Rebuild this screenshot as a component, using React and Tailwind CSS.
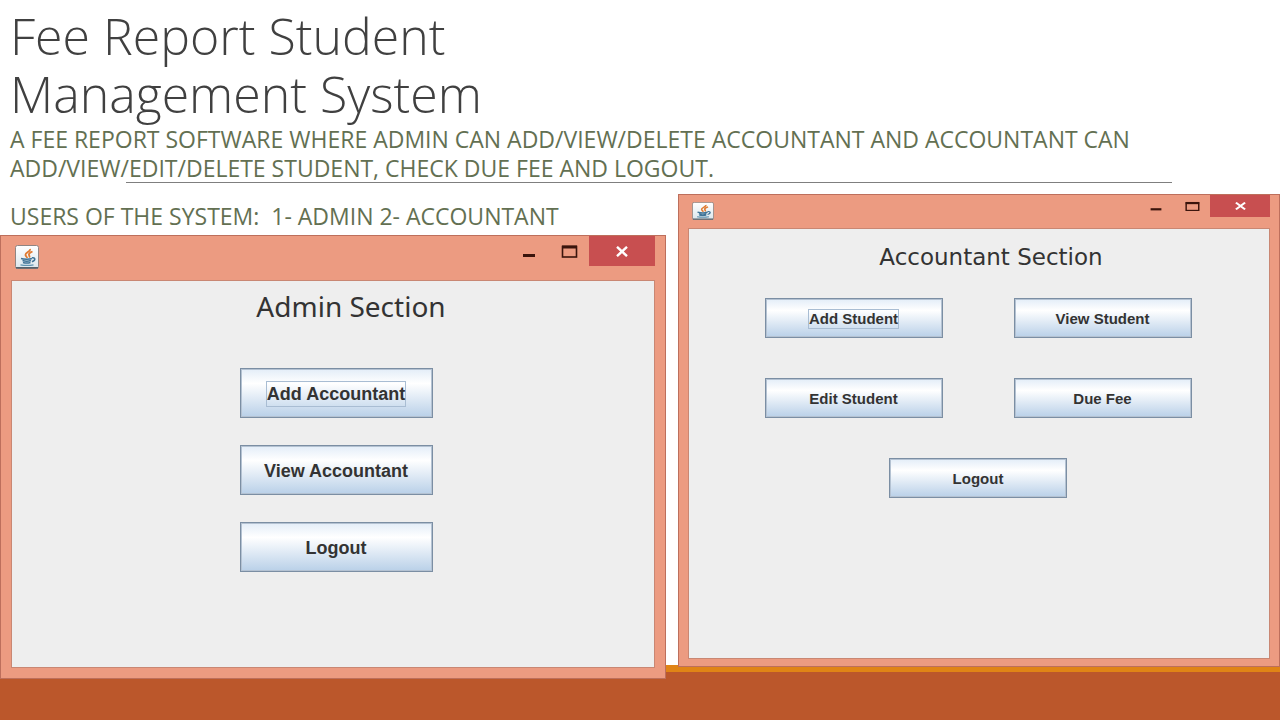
import React from 'react';
import clsx from 'clsx';

function JavaIcon({ className }) {
  return (
    <svg className={className} viewBox="0 0 24 24" preserveAspectRatio="none" aria-hidden="true">
      <defs>
        <linearGradient id="tile" x1="0" y1="0" x2="0" y2="1">
          <stop offset="0" stopColor="#ffffff" />
          <stop offset="1" stopColor="#dbe6ec" />
        </linearGradient>
      </defs>
      <rect x="0.5" y="0.5" width="23" height="23" rx="2" fill="url(#tile)" stroke="#8f8583" />
      <path d="M1 22.8h22" stroke="#56616b" strokeWidth="1.6" />
      <path d="M15 4c1 2.500-5 3.500-4.500 6 .2 1.200 1.500 2 1.800 3M17.500 6.500c-2.500 1-4 2-3.500 3.500.3.900 1 1.500.2 2.500" fill="none" stroke="#e07a30" strokeWidth="1.800" />
      <path d="M6 13.500c3 1 8.500 1 11 0M7.500 15.500c2.500.9 6 .9 8.500 0M8 17.500c2.500.8 5 .8 7.500 0M17 12.800c3.500-.6 4 2.400 0 4" fill="none" stroke="#3f7396" strokeWidth="1.500" />
      <path d="M5.500 19.800c4 .8 9 .8 13 0" fill="none" stroke="#5f93b0" strokeWidth="1.300" />
    </svg>
  );
}

function SwingButton({ children, large, focused }) {
  return (
    <button
      type="button"
      className={clsx(
        'flex items-center justify-center border border-[#7b8ea3] bg-linear-to-b from-[#e3edf8] via-white via-30% to-[#b9d0e8] font-bold text-[#333333] inset-ring inset-ring-[#b4c2d2]',
        large ? 'h-[50px] w-[193px] pt-[2px] text-lg' : 'h-10 w-[178px] pt-px text-[15px]'
      )}
    >
      <span className={clsx('border', large ? 'leading-6' : 'leading-[18px]', focused ? 'border-[#a9bdd3]' : 'border-transparent')}>
        {children}
      </span>
    </button>
  );
}

function AppWindow({ large, children }) {
  return (
    <section
      className={clsx(
        'flex flex-col border border-[#bd6f5c] bg-[#ec9b81] font-["Liberation_Sans",Arial,sans-serif]',
        large ? 'px-[10px] pb-[10px]' : 'px-[9px] pb-[7px]'
      )}
    >
      <div className={clsx('flex items-start justify-between', large ? 'h-11' : 'h-[33px]')}>
        <JavaIcon className={large ? 'mt-[9px] ml-1 h-6 w-6' : 'mt-[7px] ml-1 h-[18px] w-[22px]'} />
        <div className="flex items-start">
          <button type="button" aria-label="Minimize" className={large ? 'h-[30px] w-10' : 'h-[22px] w-9'}>
            <svg className="h-full w-full" viewBox="0 0 40 30" preserveAspectRatio="none" aria-hidden="true">
              <path d="M14 19.500h12" stroke="#3a140c" strokeWidth="3" />
            </svg>
          </button>
          <button type="button" aria-label="Maximize" className={large ? 'h-[30px] w-10' : 'h-[22px] w-9'}>
            <svg className="h-full w-full" viewBox="0 0 40 30" preserveAspectRatio="none" aria-hidden="true">
              <rect x="13.500" y="10.500" width="14" height="10.500" fill="none" stroke="#3a140c" strokeWidth="1.600" />
              <path d="M13 11h15" stroke="#3a140c" strokeWidth="3" />
            </svg>
          </button>
          <button
            type="button"
            aria-label="Close"
            className={clsx('flex items-center justify-center bg-[#c84f50]', large ? 'h-[30px] w-[66px]' : 'h-[22px] w-[60px]')}
          >
            <svg className={large ? 'h-[11px] w-3' : 'h-2 w-[11px]'} viewBox="0 0 12 11" preserveAspectRatio="none" aria-hidden="true">
              <path d="M1 .8l10 9.400M11 .8L1 10.200" stroke="#ffffff" strokeWidth="2.400" />
            </svg>
          </button>
        </div>
      </div>
      <div className={clsx('flex flex-col items-center border border-[#c98773] bg-[#eeeeee]', large ? 'h-[388px]' : 'h-[431px]')}>
        {children}
      </div>
    </section>
  );
}

function App() {
  return (
    <div className="relative min-h-screen w-full overflow-hidden bg-white font-['Open_Sans',sans-serif]">
      {/* Slide footer band, the windows sit on top of it */}
      <div className="absolute inset-x-0 bottom-0 h-[55px] border-t-[7px] border-[#e08416] bg-[#bb572b]" />

      <header className="relative h-[194px] pt-[7px] pl-[10px]">
        <h1 className="text-[50px] leading-[58px] font-light text-[#404040]">
          Fee Report Student
          <br />
          Management System
        </h1>
        <p className="pt-[2px] text-[23px] leading-[29px] text-[#637052]">
          A FEE REPORT SOFTWARE WHERE ADMIN CAN ADD/VIEW/DELETE ACCOUNTANT AND ACCOUNTANT CAN
          <br />
          ADD/VIEW/EDIT/DELETE STUDENT, CHECK DUE FEE AND LOGOUT.
        </p>
        <hr className="absolute top-[182px] right-[108px] left-[126px] border-[#7f7f7f]" />
      </header>

      <main className="relative grid grid-cols-[666fr_602fr] items-start gap-3">
        <div>
          <p className="h-[41px] pt-2 pl-[10px] text-[23px] leading-[29px] text-[#637052]">
            USERS OF THE SYSTEM:&nbsp; 1- ADMIN 2- ACCOUNTANT
          </p>
          <AppWindow large>
            <h2 className="mt-[7px] mb-11 pl-9 font-['Noto_Sans',sans-serif] text-[28px] leading-9 text-[#333333]">Admin Section</h2>
            <div className="flex flex-col gap-[27px] pl-[6px]">
              <SwingButton large focused>Add Accountant</SwingButton>
              <SwingButton large>View Accountant</SwingButton>
              <SwingButton large>Logout</SwingButton>
            </div>
          </AppWindow>
        </div>

        <AppWindow>
          <h2 className="mt-3 mb-[25px] pl-6 font-['DejaVu_Sans',sans-serif] text-[23px] leading-8 text-[#333333]">Accountant Section</h2>
          <div className="grid grid-cols-2 gap-x-[71px] gap-y-10 pr-[2px]">
            <SwingButton focused>Add Student</SwingButton>
            <SwingButton>View Student</SwingButton>
            <SwingButton>Edit Student</SwingButton>
            <SwingButton>Due Fee</SwingButton>
            <div className="col-span-2 flex justify-center">
              <SwingButton>Logout</SwingButton>
            </div>
          </div>
        </AppWindow>
      </main>
    </div>
  );
}

export default App;
